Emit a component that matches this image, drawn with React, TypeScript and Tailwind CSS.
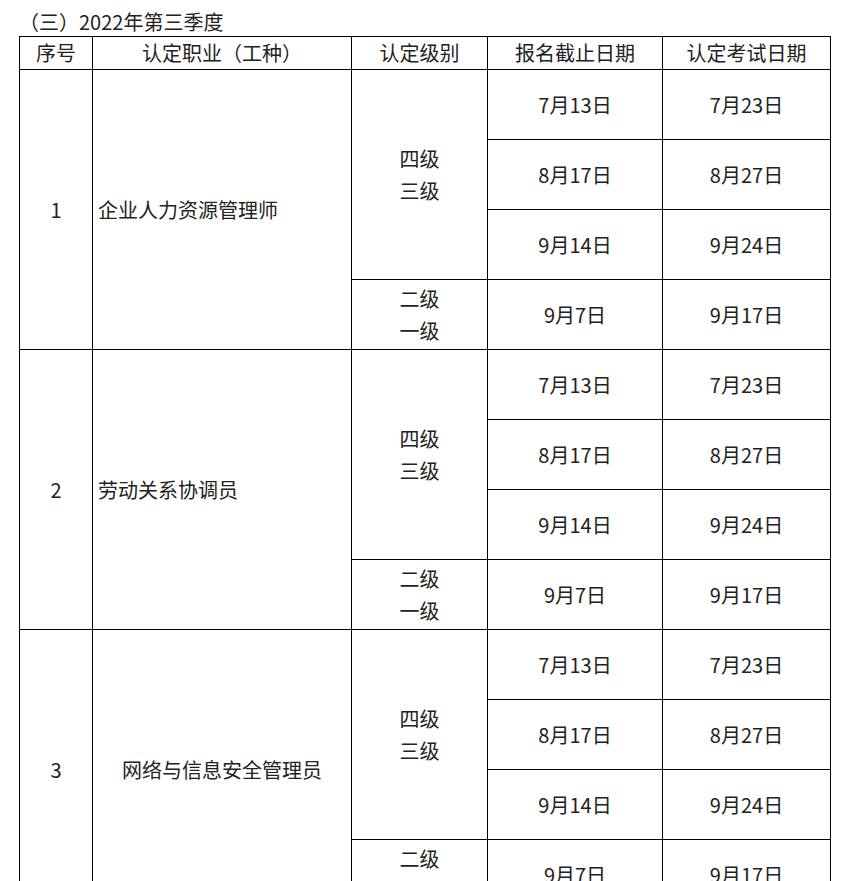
import React from 'react';

const groups = [
  { no: '1', name: '企业人力资源管理师', center: false },
  { no: '2', name: '劳动关系协调员', center: false },
  { no: '3', name: '网络与信息安全管理员', center: true },
];

const dates = [
  ['7月13日', '7月23日'],
  ['8月17日', '8月27日'],
  ['9月14日', '9月24日'],
  ['9月7日', '9月17日'],
];

const cell = 'border border-black text-center align-middle p-0';

const App = () => {
  return (
    <div
      className="bg-white text-[#222] text-[20px] pt-[8px] px-[19px]"
      style={{ fontFamily: '"Noto Sans CJK SC", "Noto Sans", sans-serif' }}
    >
      <div className="leading-[28px]">（三）2022年第三季度</div>
      <table className="table-fixed border-collapse w-[811px] leading-[32px]">
        <colgroup>
          <col className="w-[73px]" />
          <col className="w-[259px]" />
          <col className="w-[136px]" />
          <col className="w-[175px]" />
          <col className="w-[168px]" />
        </colgroup>
        <thead>
          <tr className="h-[32px]">
            <th className={`${cell} font-normal`}>序号</th>
            <th className={`${cell} font-normal`}>认定职业（工种）</th>
            <th className={`${cell} font-normal`}>认定级别</th>
            <th className={`${cell} font-normal`}>报名截止日期</th>
            <th className={`${cell} font-normal`}>认定考试日期</th>
          </tr>
        </thead>
        <tbody>
          {groups.map((g) =>
            dates.map((d, i) => (
              <tr key={`${g.no}-${i}`} className="h-[70px]">
                {i === 0 && (
                  <>
                    <td rowSpan={4} className={cell}>
                      {g.no}
                    </td>
                    <td
                      rowSpan={4}
                      className={`border border-black align-middle py-0 px-[5px] ${
                        g.center ? 'text-center' : 'text-left'
                      }`}
                    >
                      {g.name}
                    </td>
                    <td rowSpan={3} className={cell}>
                      <div>四级</div>
                      <div>三级</div>
                    </td>
                  </>
                )}
                {i === 3 && (
                  <td className={cell}>
                    <div>二级</div>
                    <div>一级</div>
                  </td>
                )}
                <td className={cell}>{d[0]}</td>
                <td className={cell}>{d[1]}</td>
              </tr>
            ))
          )}
        </tbody>
      </table>
    </div>
  );
};

export default App;
